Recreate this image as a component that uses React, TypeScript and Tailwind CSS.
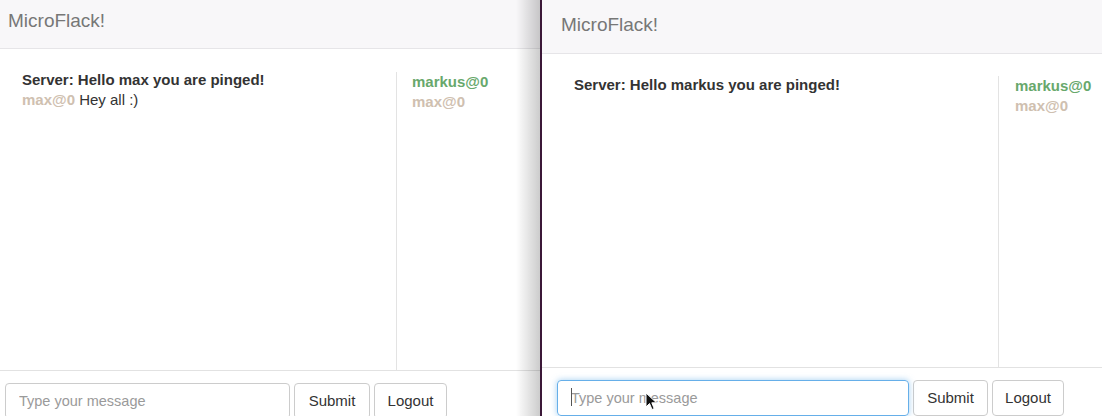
import React from "react";

type User = { name: string; color: string };

const users: User[] = [
  { name: "markus@0", color: "text-[#68a86c]" },
  { name: "max@0", color: "text-[#cfc0b0]" },
];

function Header({ className }: { className: string }) {
  return (
    <div className={`shrink-0 bg-[#f8f7f9] border-b border-[#e6e5e8] text-[19px] leading-[22px] text-[#777] ${className}`}>
      MicroFlack!
    </div>
  );
}

function UserList({ className }: { className: string }) {
  return (
    <div className={`border-l border-[#e3e3e3] font-bold ${className}`}>
      {users.map((u) => (
        <div key={u.name} className={`leading-[20px] ${u.color}`}>
          {u.name}
        </div>
      ))}
    </div>
  );
}

function Footer({
  className,
  inputW,
  submitW,
  logoutW,
  focused,
}: {
  className: string;
  inputW: string;
  submitW: string;
  logoutW: string;
  focused?: boolean;
}) {
  return (
    <div className={`shrink-0 border-t border-[#e2e2e2] flex gap-[4px] items-start ${className}`}>
      <div className="relative">
        <input
          placeholder="Type your message"
          className={`${inputW} h-[36px] rounded-[4px] border px-[13px] text-[14.5px] text-[#555] placeholder:text-[#9a9a9a] outline-none ${
            focused
              ? "border-[#66afe9] shadow-[0_0_6px_rgba(102,175,233,0.6)]"
              : "border-[#cccccc]"
          }`}
        />
        {focused && (
          <span className="absolute left-[14px] top-[8px] w-px h-[18px] bg-[#555]" />
        )}
      </div>
      <button className={`${submitW} h-[36px] rounded-[4px] border border-[#cccccc] bg-white text-[15px] text-[#333]`}>
        Submit
      </button>
      <button className={`${logoutW} h-[36px] rounded-[4px] border border-[#cccccc] bg-white text-[15px] text-[#333]`}>
        Logout
      </button>
    </div>
  );
}

export default function App() {
  return (
    <div className="flex w-[1102px] h-[416px] overflow-hidden bg-white text-[15px] text-[#333] font-['Liberation_Sans',Roboto,Arial,sans-serif]">
      {/* left window */}
      <div className="relative w-[540px] shrink-0 flex flex-col">
        <Header className="h-[49px] pl-[8px] pt-[10px]" />
        <div className="flex-1 flex min-h-0">
          <div className="w-[396px] pl-[22px] pt-[21px] leading-[20px]">
            <div className="font-bold">Server: Hello max you are pinged!</div>
            <div>
              <span className="font-bold text-[#cfc0b0]">max@0</span> Hey all :)
            </div>
          </div>
          <UserList className="flex-1 mt-[23px] pl-[15px] pt-[-2px]" />
        </div>
        <Footer
          className="h-[46px] pl-[5px] pt-[12px]"
          inputW="w-[285px]"
          submitW="w-[76px]"
          logoutW="w-[73px]"
        />
        <div className="absolute inset-y-0 right-0 w-[24px] pointer-events-none bg-gradient-to-r from-transparent to-black/20" />
      </div>

      {/* window divider */}
      <div className="w-[2px] shrink-0 bg-[#3b1838]" />

      {/* right window */}
      <div className="relative flex-1 flex flex-col">
        <Header className="h-[54px] pl-[19px] pt-[14px]" />
        <div className="flex-1 flex min-h-0">
          <div className="w-[456px] pl-[32px] pt-[21px] leading-[20px]">
            <div className="font-bold">Server: Hello markus you are pinged!</div>
          </div>
          <UserList className="flex-1 mt-[22px] pl-[16px]" />
        </div>
        <Footer
          className="h-[49px] pl-[15px] pt-[12px]"
          inputW="w-[352px]"
          submitW="w-[75px]"
          logoutW="w-[72px]"
          focused
        />
        <svg
          className="absolute left-[103px] top-[392px] pointer-events-none"
          width="13"
          height="20"
          viewBox="0 0 13 20"
        >
          <path
            d="M1 1 L1 15 L4.5 11.5 L7 17.5 L9.2 16.6 L6.8 10.8 L11.5 10.8 Z"
            fill="#111"
            stroke="#fff"
            strokeWidth="1"
          />
        </svg>
      </div>
    </div>
  );
}
